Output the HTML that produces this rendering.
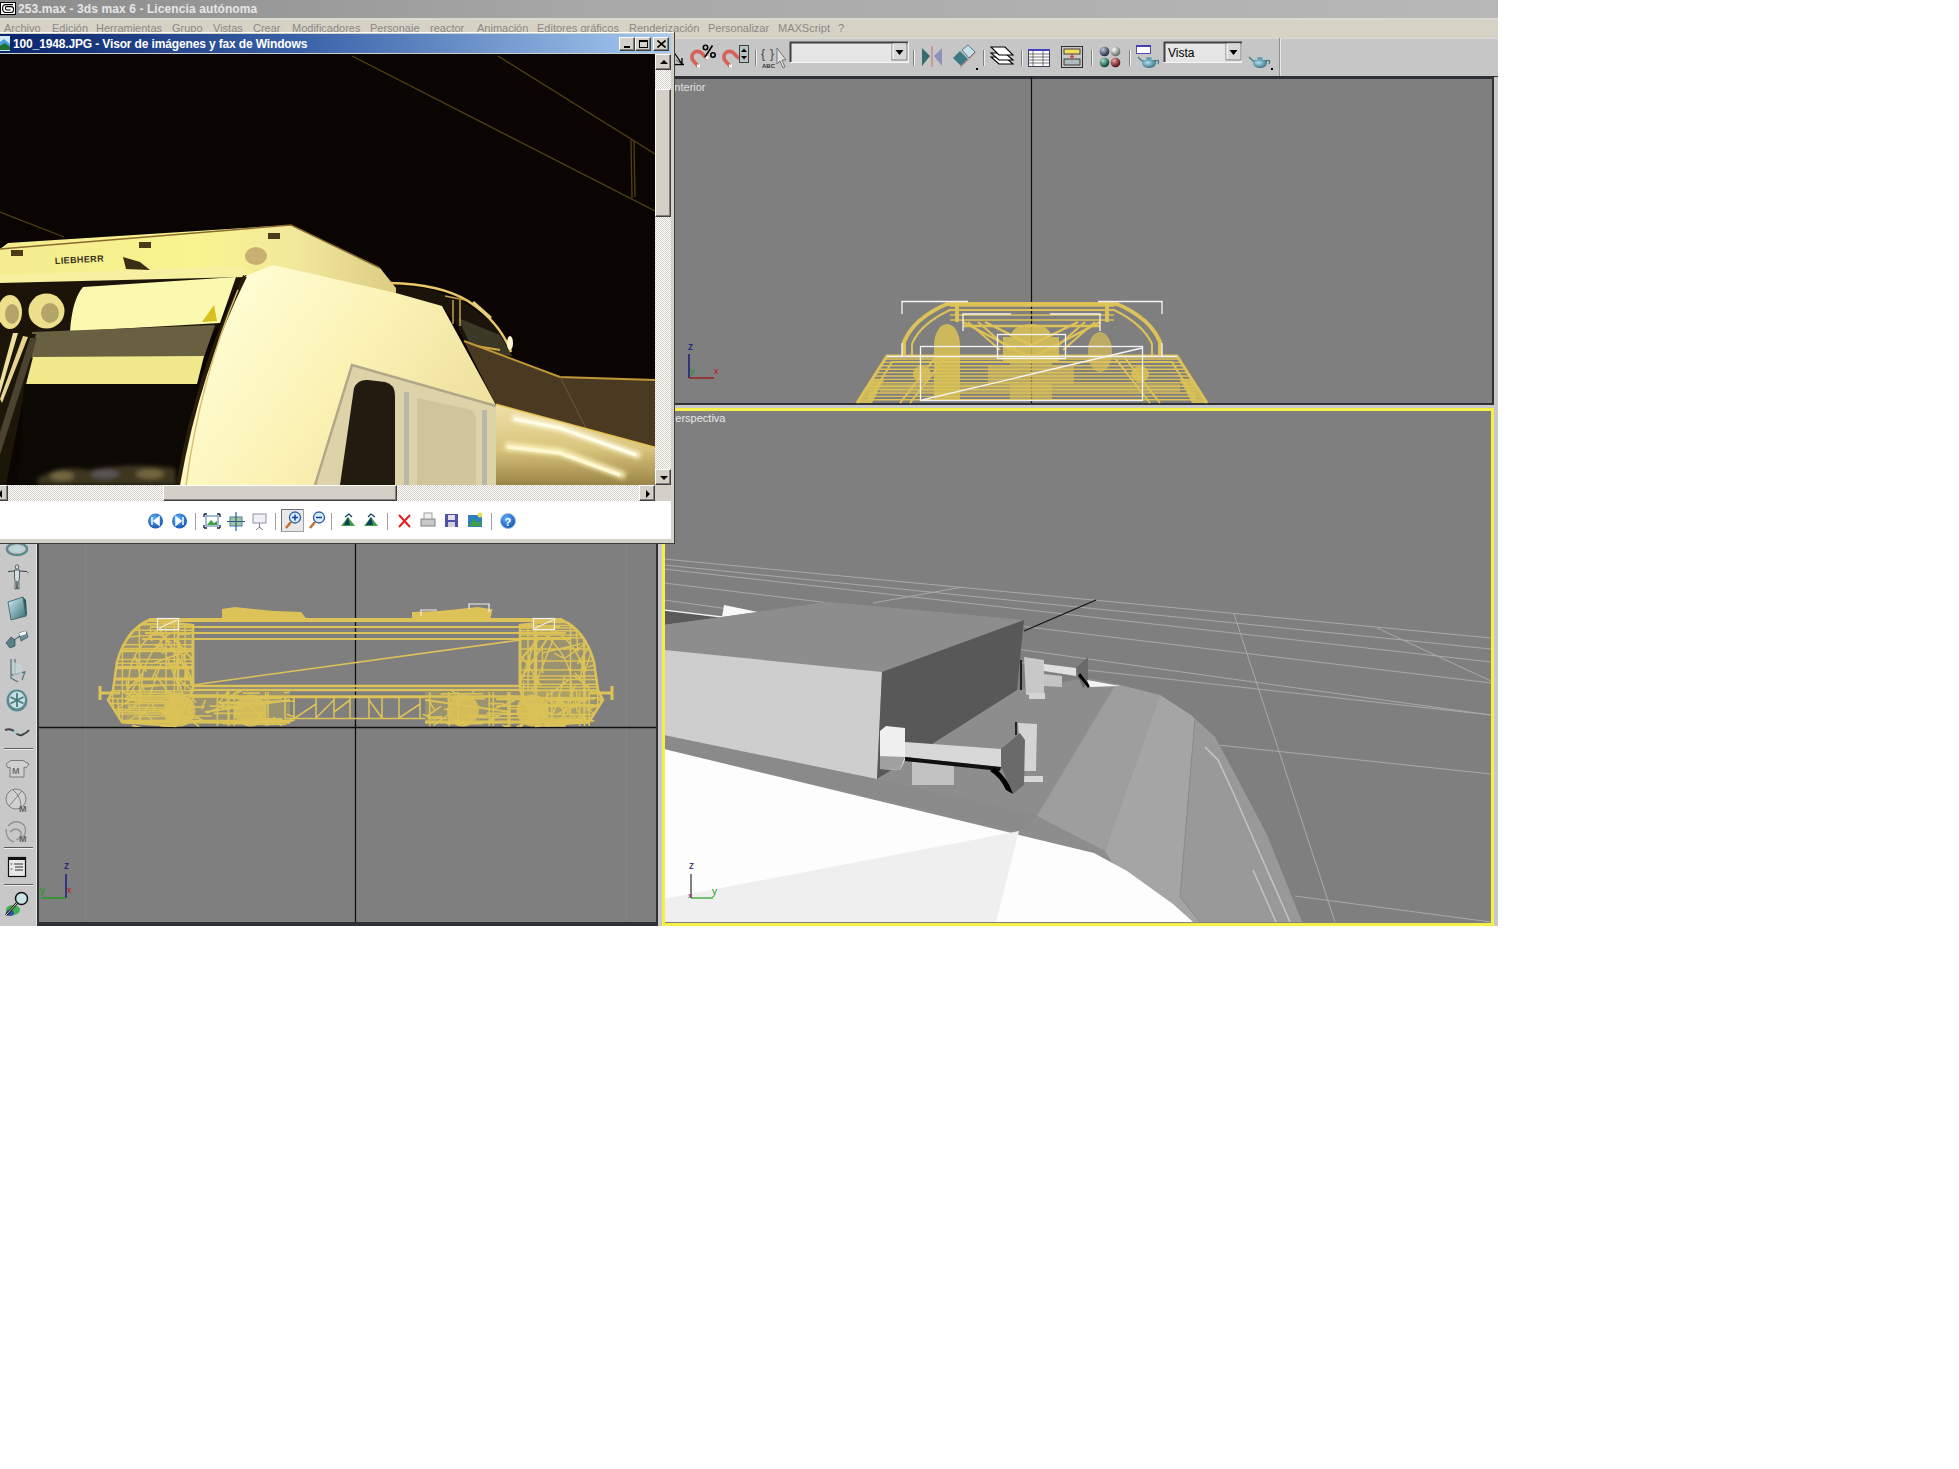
<!DOCTYPE html>
<html><head><meta charset="utf-8">
<style>
*{margin:0;padding:0;box-sizing:border-box}
html,body{width:1959px;height:1469px;overflow:hidden;background:#fff;font-family:"Liberation Sans",sans-serif}
.a{position:absolute}
#app{position:absolute;left:0;top:0;width:1498px;height:926px;background:#c8c8c8;overflow:hidden}
#title{left:0;top:0;width:1498px;height:18px;background:linear-gradient(90deg,#8c8c8c 0%,#a8a8a8 40%,#b8b8b8 100%)}
#title .t{left:18px;top:2px;font-size:12px;font-weight:bold;color:#e6e6e6;white-space:nowrap;letter-spacing:0.1px}
#menu{left:0;top:18px;width:1498px;height:20px;background:#d6d3c6;border-top:2px solid #dcd9d4}
#menu span{position:absolute;top:2px;font-size:11px;color:#8a8884;white-space:nowrap}

.vp{position:absolute;background:#7f7f7f}
.btn{position:absolute;width:16px;height:14px;background:#d4d0c8;border:1px solid;border-color:#fff #404040 #404040 #fff;box-shadow:inset -1px -1px 0 #808080}
.chk{background-color:#fff;background-image:linear-gradient(45deg,#d4d0c8 25%,transparent 25%,transparent 75%,#d4d0c8 75%),linear-gradient(45deg,#d4d0c8 25%,transparent 25%,transparent 75%,#d4d0c8 75%);background-size:2px 2px;background-position:0 0,1px 1px}
</style></head><body>
<div id="app">
  <div id="title" class="a">
    <svg class="a" style="left:0;top:0" width="17" height="17" viewBox="0 0 17 17"><rect x="0.5" y="2.5" width="15" height="12" fill="#fff" stroke="#000"/><path d="M13 4.6 H5.5 Q2.6 4.6 2.6 8.6 Q2.6 12.5 5.8 12.5 H10.8 Q13.6 12.5 13.6 9.2 Q13.6 6.6 10.8 6.6 H6.6 Q5.4 6.6 5.4 8.4 Q5.4 10 7.4 10 H10.6" fill="none" stroke="#000" stroke-width="1.1"/></svg>
    <div class="a t">253.max - 3ds max 6 - Licencia autónoma</div>
  </div>
  <div id="menu" class="a">
    <span style="left:4px">Archivo</span>
    <span style="left:52px">Edición</span>
    <span style="left:96px">Herramientas</span>
    <span style="left:172px">Grupo</span>
    <span style="left:213px">Vistas</span>
    <span style="left:253px">Crear</span>
    <span style="left:292px">Modificadores</span>
    <span style="left:370px">Personaje</span>
    <span style="left:430px">reactor</span>
    <span style="left:477px">Animación</span>
    <span style="left:537px">Editores gráficos</span>
    <span style="left:629px">Renderización</span>
    <span style="left:708px">Personalizar</span>
    <span style="left:778px">MAXScript</span>
    <span style="left:838px">?</span>
  </div>
  <div id="tb" class="a" style="left:662px;top:38px;width:836px;height:38px;background:#c6c6c6;border-top:1px solid #d8d8d8">
    <svg class="a" style="left:0;top:-1px" width="836" height="39" viewBox="662 38 836 39">
      <!-- angle snap -->
      <path d="M671 48 L682 64 M676 60 L682 64 L682 58" stroke="#000" stroke-width="1.3" fill="none"/><path d="M671 64.5 H684" stroke="#000" stroke-width="1.5"/><path d="M671 50 L671 64 L681 64Z" fill="#bcbcbc" opacity="0.7"/>
      <!-- magnet % -->
      <path d="M699 67 L693.5 61 A5.5 5.5 0 0 1 701.5 53 L707 58.5" stroke="#d86058" stroke-width="3.6" fill="none"/>
      <rect x="697" y="64.5" width="3" height="3" fill="#fff"/><rect x="705.5" y="56" width="3" height="3" fill="#fff"/>
      <circle cx="705.5" cy="47.5" r="2.2" fill="none" stroke="#000" stroke-width="1.6"/><circle cx="713" cy="55" r="2.2" fill="none" stroke="#000" stroke-width="1.6"/><path d="M712.5 45.5 L705 57" stroke="#000" stroke-width="1.6"/>
      <!-- magnet spinner -->
      <path d="M731 67 L725.5 61 A5.5 5.5 0 0 1 733.5 53 L739 58.5" stroke="#d86058" stroke-width="3.6" fill="none"/>
      <rect x="729" y="64.5" width="3" height="3" fill="#fff"/>
      <rect x="739.5" y="45.5" width="9" height="17" fill="#b8c4c4" stroke="#404040"/><path d="M741 52 L744 48.5 L747 52Z M741 56 L744 59.5 L747 56Z" fill="#000"/>
      <line x1="755.5" y1="50" x2="755.5" y2="66" stroke="#808080"/><line x1="756.5" y1="50" x2="756.5" y2="66" stroke="#f0f0f0"/>
      <!-- {} abc -->
      <text x="761" y="58" font-size="12" fill="#404040" font-family="Liberation Sans">{</text><text x="770" y="58" font-size="12" fill="#404040" font-family="Liberation Sans">}</text>
      <text x="762" y="68" font-size="6" font-weight="bold" fill="#303030" font-family="Liberation Sans">ABC</text>
      <path d="M777 48 L777 64 L780 61 L783 68 L785 67 L782 60 L786 60Z" fill="#e0e0e0" stroke="#606060" stroke-width="0.8"/>
      <!-- dropdown 1 -->
      <rect x="790.5" y="42.5" width="118" height="20" fill="#e6e6e6" stroke="#f4f4f4"/>
      <path d="M790.5 62 V42.5 H908" stroke="#404040" stroke-width="2" fill="none"/>
      <rect x="892" y="44" width="15" height="16" fill="#d8d8d8" stroke="#808080"/><path d="M893 44 H906 M893 44 V59" stroke="#fff"/>
      <path d="M895.5 50 H903.5 L899.5 55Z" fill="#000"/>
      <line x1="913.5" y1="50" x2="913.5" y2="66" stroke="#808080"/><line x1="914.5" y1="50" x2="914.5" y2="66" stroke="#f0f0f0"/>
      <!-- mirror -->
      <path d="M922 48 L930 56 L922 66Z" fill="#3a6a70"/><path d="M942 48 L934 56 L942 66Z" fill="#9090b8"/><line x1="932" y1="46" x2="932" y2="67" stroke="#d08080" stroke-width="1.3"/>
      <!-- align -->
      <path d="M953 58 L960 51 L968 59 L961 66Z" fill="#3a7a80"/><path d="M962 50 L968 45 L975 52 L969 58Z" fill="#c8e0e8" stroke="#406070" stroke-width="0.8"/><path d="M960 68 L976 52" stroke="#e08080" stroke-width="1"/><rect x="976" y="68" width="2" height="2" fill="#000"/>
      <line x1="983.5" y1="50" x2="983.5" y2="66" stroke="#808080"/><line x1="984.5" y1="50" x2="984.5" y2="66" stroke="#f0f0f0"/>
      <!-- layers -->
      <g fill="#fff" stroke="#000" stroke-width="1.1"><path d="M991 57 L1005 57 L1013 64 L999 64Z"/><path d="M991 53 L1005 53 L1013 60 L999 60Z"/><path d="M991 47 L1005 47 L1013 55 L999 55Z"/></g>
      <line x1="1021.5" y1="50" x2="1021.5" y2="66" stroke="#808080"/><line x1="1022.5" y1="50" x2="1022.5" y2="66" stroke="#f0f0f0"/>
      <!-- spreadsheet -->
      <rect x="1028.5" y="49.5" width="21" height="17" fill="#fff" stroke="#404060"/><rect x="1028" y="49" width="22" height="2" fill="#4040c0"/>
      <g stroke="#404040" stroke-width="0.7"><path d="M1029 54 H1049 M1029 57 H1049 M1029 60 H1049 M1029 63 H1049 M1033 51 V66 M1043 51 V66"/></g>
      <!-- schematic -->
      <rect x="1061.5" y="46.5" width="21" height="21" fill="#c8c8c8" stroke="#303030"/><rect x="1064" y="49" width="16" height="5" fill="#f0e060" stroke="#202020" stroke-width="0.8"/><rect x="1064" y="59" width="16" height="6" fill="#b0b8c0" stroke="#202020" stroke-width="0.8"/><path d="M1072 54 V58 M1070 56 L1072 58 L1074 56" stroke="#d04040" stroke-width="1.2" fill="none"/>
      <line x1="1091.5" y1="50" x2="1091.5" y2="66" stroke="#808080"/><line x1="1092.5" y1="50" x2="1092.5" y2="66" stroke="#f0f0f0"/>
      <!-- spheres -->
      <defs><radialGradient id="s1" cx="0.35" cy="0.3" r="0.7"><stop offset="0" stop-color="#c0c8e0"/><stop offset="1" stop-color="#202840"/></radialGradient>
      <radialGradient id="s2" cx="0.35" cy="0.3" r="0.7"><stop offset="0" stop-color="#ffffff"/><stop offset="1" stop-color="#606860"/></radialGradient>
      <radialGradient id="s3" cx="0.35" cy="0.3" r="0.7"><stop offset="0" stop-color="#a0e0d0"/><stop offset="1" stop-color="#104030"/></radialGradient>
      <radialGradient id="s4" cx="0.35" cy="0.3" r="0.7"><stop offset="0" stop-color="#f0a0a0"/><stop offset="1" stop-color="#501010"/></radialGradient>
      <radialGradient id="tp" cx="0.4" cy="0.35" r="0.7"><stop offset="0" stop-color="#b0e0f0"/><stop offset="1" stop-color="#306878"/></radialGradient></defs>
      <circle cx="1104.5" cy="51.5" r="4.8" fill="url(#s1)"/><circle cx="1115.5" cy="51.5" r="4.8" fill="url(#s2)"/><circle cx="1104.5" cy="62.5" r="4.8" fill="url(#s3)"/><circle cx="1115.5" cy="62.5" r="4.8" fill="url(#s4)"/>
      <line x1="1129.5" y1="50" x2="1129.5" y2="66" stroke="#808080"/><line x1="1130.5" y1="50" x2="1130.5" y2="66" stroke="#f0f0f0"/>
      <!-- render scene -->
      <rect x="1136.5" y="45.5" width="14" height="8" fill="#fff" stroke="#5050b0"/><rect x="1136" y="45" width="15" height="2" fill="#4040b0"/>
      <path d="M1142 60 Q1141 68 1149 68 Q1157 68 1156 60 Z" fill="url(#tp)"/><path d="M1142 61 L1138 57 M1156 61 Q1160 59 1158 64" stroke="#407888" stroke-width="1.3" fill="none"/><ellipse cx="1149" cy="58.5" rx="3" ry="1.5" fill="#60a0b0"/>
      <!-- dropdown vista -->
      <rect x="1164.5" y="42.5" width="77" height="20" fill="#e6e6e6" stroke="#f4f4f4"/>
      <path d="M1164.5 62 V42.5 H1242" stroke="#404040" stroke-width="2" fill="none"/>
      <rect x="1226" y="44" width="15" height="16" fill="#d8d8d8" stroke="#808080"/><path d="M1227 44 H1240 M1227 44 V59" stroke="#fff"/>
      <path d="M1229.5 50 H1237.5 L1233.5 55Z" fill="#000"/>
      <text x="1168" y="57" font-size="12" fill="#000" font-family="Liberation Sans">Vista</text>
      <!-- teapot -->
      <path d="M1253 60 Q1252 68 1260 68 Q1268 68 1267 60 Z" fill="url(#tp)"/><path d="M1253 61 L1249 57 M1267 61 Q1271 59 1269 64" stroke="#407888" stroke-width="1.3" fill="none"/><ellipse cx="1260" cy="58.5" rx="3" ry="1.5" fill="#60a0b0"/><rect x="1271" y="68" width="2" height="2" fill="#000"/>
      <line x1="1279.5" y1="38" x2="1279.5" y2="76" stroke="#909090"/><line x1="1280.5" y1="38" x2="1280.5" y2="76" stroke="#e8e8e8"/>
    </svg>
  </div>
  <div class="a" style="left:0;top:76px;width:1498px;height:2px;background:#2e3236"></div>
  <!-- viewports -->
  <div class="a" style="left:662px;top:77px;width:836px;height:849px;background:#c8c8c8"></div>
  <div class="vp" style="left:662px;top:77px;width:832px;height:328px;border:2px solid #2e3236;border-right-width:2px">
    <div class="a" style="left:3px;top:2px;font-size:11px;color:#e0e0e0;white-space:nowrap">Anterior</div>
    <svg class="a" style="left:-2px;top:-2px" width="832" height="328" viewBox="662 77 832 328">
      <line x1="1031.5" y1="77" x2="1031.5" y2="403" stroke="#101010" stroke-width="1.2"/>
      <g fill="none" stroke="#dcc257">
        <path d="M857 403 L887 356 L1177 356 L1207 403" stroke-width="3"/>
        <path d="M870 398 L892 362 L1172 362 L1194 398" stroke-width="2"/>
        <path d="M904 356 L904 342 Q914 318 947 304 L1117 304 Q1150 318 1160 342 L1160 356" stroke-width="4"/>
        <path d="M912 356 L912 344 Q920 324 950 310 L1114 310 Q1143 324 1152 344 L1152 356" stroke-width="2"/>
        <path d="M957 304 V322 M1107 304 V322" stroke-width="4"/>
        <path d="M963 322 L1031 358 L1100 322 M985 322 L1031 345 L1078 322 M963 326 L1100 326" stroke-width="2.5"/>
      </g>
      <g stroke="#dcc257" stroke-width="1.4"><line x1="885" y1="359.0" x2="1179" y2="359.0"/><line x1="883" y1="362.4" x2="1181" y2="362.4"/><line x1="881" y1="365.8" x2="1183" y2="365.8"/><line x1="879" y1="369.2" x2="1185" y2="369.2"/><line x1="877" y1="372.6" x2="1187" y2="372.6"/><line x1="875" y1="376.0" x2="1189" y2="376.0"/><line x1="873" y1="379.4" x2="1191" y2="379.4"/><line x1="868" y1="382.8" x2="1196" y2="382.8"/><line x1="868" y1="386.2" x2="1196" y2="386.2"/><line x1="868" y1="389.6" x2="1196" y2="389.6"/><line x1="868" y1="393.0" x2="1196" y2="393.0"/><line x1="868" y1="396.4" x2="1196" y2="396.4"/><line x1="868" y1="399.8" x2="1196" y2="399.8"/><line x1="950" y1="306" x2="1114" y2="306"/><line x1="950" y1="310" x2="1114" y2="310"/><line x1="950" y1="315" x2="1114" y2="315"/><line x1="950" y1="320" x2="1114" y2="320"/><path d="M900 403 L935 358 M910 403 L945 358 M1160 403 L1125 358 M1150 403 L1115 358 M968 322 L1000 350 M978 322 L1010 350 M1095 322 L1063 350 M1085 322 L1053 350" stroke-width="2"/></g>
      <g fill="#dcc257" opacity="0.85">
        <ellipse cx="947" cy="345" rx="13" ry="21"/><rect x="934" y="345" width="26" height="55"/>
        <ellipse cx="1031" cy="336" rx="20" ry="12"/><rect x="1003" y="337" width="56" height="26"/><rect x="1010" y="363" width="42" height="38" opacity="0.7"/>
        <rect x="988" y="366" width="22" height="18" opacity="0.7"/><rect x="1052" y="366" width="22" height="18" opacity="0.7"/>
        <ellipse cx="1100" cy="352" rx="12" ry="20" opacity="0.8"/>
        <ellipse cx="922" cy="374" rx="9" ry="8"/><ellipse cx="1140" cy="374" rx="9" ry="8"/>
        <rect x="880" y="384" width="300" height="8" opacity="0.6"/>
        <path d="M857 403 L872 380 L884 380 L872 403Z M1207 403 L1192 380 L1180 380 L1192 403Z"/>
      </g>
      <g fill="none" stroke="#f4f4f4" stroke-width="1.3">
        <path d="M902 314 V301.5 H968 M1098 301.5 H1162 V314 M902 343 V356 M887 356.5 H1177 M1162 343 V356"/>
        <path d="M963 331 V314 H1011 M1050 314 H1100 V331"/>
        <rect x="997.5" y="334.5" width="68" height="24"/>
        <rect x="920.5" y="346.5" width="222" height="54"/>
        <path d="M922 400 L1142 348"/>
      </g>
      <g stroke-width="1.3"><line x1="689" y1="378" x2="689" y2="354" stroke="#0a0a80"/><line x1="689" y1="378" x2="714" y2="378" stroke="#a01010"/></g>
      <text x="688" y="350" font-size="10" fill="#10108a" font-family="Liberation Sans">z</text>
      <text x="690" y="374" font-size="9" fill="#10a010" font-family="Liberation Sans">y</text>
      <text x="714" y="374" font-size="9" fill="#c01010" font-family="Liberation Sans">x</text>
    </svg>
  </div>
  <!-- left command panel -->
  <div class="a" style="left:0;top:543px;width:37px;height:383px;background:#c8c8c8;border-right:1px solid #e8e8e8">
    <svg class="a" style="left:0;top:0" width="37" height="383" viewBox="0 543 37 383">
      <defs><linearGradient id="tl" x1="0" y1="0" x2="1" y2="1"><stop offset="0" stop-color="#d8f0f4"/><stop offset="1" stop-color="#306a74"/></linearGradient></defs>
      <ellipse cx="17" cy="549" rx="10" ry="6" fill="none" stroke="#5a8a90" stroke-width="2.5"/><ellipse cx="17" cy="549" rx="5" ry="3" fill="#b8d8dc"/>
      <!-- biped -->
      <g fill="#d0e0e0" stroke="#3a4444" stroke-width="0.8"><ellipse cx="17" cy="567" rx="1.8" ry="2.2"/><path d="M14.5 570 L19.5 570 L19.5 578 L18.8 581 L19 589 L17.6 589 L17 581 L16.4 589 L15 589 L15.2 581 L14.5 578Z"/></g>
      <path d="M8 571.5 L14.5 571 M19.5 571 L27 571.5" stroke="#3a4444" stroke-width="1.2"/><path d="M27 572 L29 573" stroke="#708080" stroke-width="1"/>
      <!-- panel -->
      <path d="M8 602 L23 597 L26 616 L11 620Z" fill="url(#tl)" stroke="#305a60" stroke-width="0.8"/>
      <path d="M23 597 L26 600 L27 614 L26 616" fill="#2a5a60"/>
      <!-- two cubes -->
      <path d="M6 643 L11 637 L15 640 L15 646 L10 648Z" fill="#5a8088" stroke="#304850" stroke-width="0.7"/><path d="M14 640 L20 636" stroke="#304850" stroke-width="1"/>
      <path d="M19 633 L26 631 L28 637 L21 641Z" fill="#6a9098" stroke="#304850" stroke-width="0.7"/><path d="M19 633 L26 631 L26 634 L20 636Z" fill="#fff"/>
      <!-- chair -->
      <g stroke="#5a7a80" stroke-width="1.3" fill="none"><path d="M11 659 V678 L18 682 M11 675 L25 672 L22 680 M15 659 V674"/></g><path d="M13 662 L22 665 L22 674 L13 675Z" fill="#c0d8dc" opacity="0.7"/>
      <!-- wheel -->
      <ellipse cx="17" cy="700.5" rx="10.5" ry="11" fill="#5a8a90"/><ellipse cx="17" cy="700" rx="8" ry="8.5" fill="#c8e0e4"/><path d="M17 693 L17 707 M10.5 697 L23.5 703.5 M10.5 703.5 L23.5 697" stroke="#4a7a80" stroke-width="1.8"/>
      <!-- curve -->
      <path d="M5 730 Q10 728 14 731 Q18 736 22 735 Q27 733 29 730" stroke="#404848" stroke-width="2" fill="none"/><circle cx="15.5" cy="732" r="2" fill="#a8d0d8"/>
      <line x1="4" y1="748.5" x2="33" y2="748.5" stroke="#5a5a5a"/><line x1="4" y1="749.5" x2="33" y2="749.5" stroke="#f0f0f0"/>
      <!-- tshirt M -->
      <path d="M6 764 L11 760.5 L23 760.5 L29 764 L26 768 L24 767 V777 H10 V767 L8 768Z" fill="#d0d0d0" stroke="#707070" stroke-width="0.9"/>
      <text x="12" y="774" font-size="9" font-weight="bold" fill="#707070" font-family="Liberation Sans">M</text>
      <!-- ball M -->
      <circle cx="16" cy="799" r="10" fill="#d0d0d0" stroke="#808080" stroke-width="1"/><path d="M9 806 L22 791 M13 790 Q22 797 21 809" stroke="#808080" fill="none"/>
      <text x="19" y="812" font-size="9" font-weight="bold" fill="#606060" font-family="Liberation Sans">M</text>
      <!-- swirl M -->
      <g fill="none" stroke="#909090" stroke-width="1.3"><path d="M8 826 Q16 818 24 825 Q28 832 22 838 M10 832 Q16 826 21 832 Q22 838 16 840 M6 829 Q6 840 14 842"/></g>
      <text x="19" y="842" font-size="9" font-weight="bold" fill="#606060" font-family="Liberation Sans">M</text>
      <line x1="4" y1="847.5" x2="33" y2="847.5" stroke="#5a5a5a"/><line x1="4" y1="848.5" x2="33" y2="848.5" stroke="#f0f0f0"/>
      <!-- window icon -->
      <rect x="8.5" y="857.5" width="17" height="19" fill="#e8e8e8" stroke="#101010" stroke-width="1.2"/><rect x="8" y="857" width="18" height="3" fill="#101010"/>
      <path d="M14 864 H23 M15 867 H23 M15 870 H23" stroke="#303030"/><circle cx="11.5" cy="864" r="1" fill="#909090"/><circle cx="11.5" cy="869" r="1" fill="#909090"/>
      <line x1="4" y1="884.5" x2="33" y2="884.5" stroke="#5a5a5a"/><line x1="4" y1="885.5" x2="33" y2="885.5" stroke="#f0f0f0"/>
      <!-- magnifier -->
      <ellipse cx="13" cy="910" rx="7" ry="5" fill="#40b050"/><ellipse cx="10" cy="913" rx="4" ry="3" fill="#3050a0"/>
      <path d="M6 915 L17 903" stroke="#101010" stroke-width="2.5"/><path d="M6 915 L17 903" stroke="#e0e0e0" stroke-width="1"/>
      <circle cx="21.5" cy="898.5" r="6" fill="#c8e4e8" stroke="#101010" stroke-width="1.5"/>
    </svg>
  </div>
  <div class="a" style="left:37px;top:543px;width:2px;height:383px;background:#2e3236"></div>
  <div class="vp" style="left:39px;top:543px;width:619px;height:383px;border-right:2px solid #2e3236;border-bottom:4px solid #2e3236">
    <svg class="a" style="left:0;top:0" width="617" height="379" viewBox="39 543 617 379">
      <line x1="85.5" y1="543" x2="85.5" y2="922" stroke="#858585" stroke-width="1"/>
      <line x1="626.5" y1="543" x2="626.5" y2="922" stroke="#858585" stroke-width="1"/>
      <line x1="355.5" y1="543" x2="355.5" y2="922" stroke="#101010" stroke-width="1.3"/>
      <line x1="39" y1="727.5" x2="656" y2="727.5" stroke="#101010" stroke-width="1.3"/>
      <g fill="none" stroke="#dcc257">
        <path d="M149 620 L562 620" stroke-width="4"/>
        <path d="M150 627 L560 627 M145 633 L566 633 M142 639 L570 639" stroke-width="2"/>
        <path d="M193 641 V686 M520 641 V686 M178 625 V690 M535 625 V690" stroke-width="2.5"/>
        <path d="M193 686 L520 686 M190 690 L523 690 M190 696.5 L523 696.5" stroke-width="2.5"/>
        <path d="M193 685 L520 640" stroke-width="1.5"/>
        <path d="M222 611 L300 614 L305 620 M412 614 L490 611 L488 620" stroke-width="4"/>
        <path d="M149 620 Q126 630 117 662 L113 690 L108 700 L122 722 L175 726 L193 690 L193 625Z" stroke-width="2.5"/><path d="M562 620 Q585 630 594 662 L598 690 L603 700 L589 722 L536 726 L520 690 L520 625Z" stroke-width="2.5"/><path d="M122 722 L290 722 M425 722 L589 722" stroke-width="3"/>
        <path d="M100 686 V700 M612 686 V700 M100 693 H120 M590 693 H612" stroke-width="3"/>
        <path d="M160 630 L193 680 M175 640 L193 660 M553 630 L520 680 M538 640 L520 660 M205 712 L290 700 M425 700 L510 712" stroke-width="2"/>
        <path d="M285 697 V719 M294 697 V719 M316 697 V719 M334 697 V719 M350 697 V719 M369 697 V719 M382 697 V719 M399 697 V719 M420 697 V719 M285 697.5 H425 M285 718.5 H425 M295 718 L316 704 M316 718 L334 700 M369 700 L382 718 M399 718 L420 704 M334 712 L350 700" stroke-width="1.6"/>
      </g>
      <g fill="#dcc257">
        <path d="M222 609 L235 607 L300 614 L305 622 L222 622Z"/>
        <path d="M412 614 L478 607 L490 609 L490 622 L412 622Z"/>
        <clipPath id="cfl"><path d="M149 620 Q126 630 117 662 L113 690 L108 700 L122 722 L175 726 L193 690 L193 625Z"/></clipPath><clipPath id="cfr"><path d="M562 620 Q585 630 594 662 L598 690 L603 700 L589 722 L536 726 L520 690 L520 625Z"/></clipPath>
        <g clip-path="url(#cfl)"><path d="M149 620 Q126 630 117 662 L113 690 L108 700 L122 722 L175 726 L193 690 L193 625Z" fill="#dcc257" opacity="0.3"/><path d="M190.4 715.8 L217.2 723.0 M152.7 629.7 L171.9 643.0 M105 666.4 H195 M105 624.7 H195 M142.9 672.9 L129.0 688.3 M105 703.5 H195 M164.2 685.2 L143.4 687.1 M138.2 679.6 L128.8 696.7 M105 668.6 H195 M158.2 665.6 L151.5 679.5 M105 651.5 H195 M122.6 627.9 L133.2 631.3 M105 679.7 H195 M134.8 656.8 L146.6 671.8 M154.4 644.2 L186.0 655.3 M179.6 641.9 L174.2 679.1 M190.1 633.9 L178.5 634.8 M107.1 615 V728 M166.8 725.0 L135.4 747.2 M193.9 699.6 L212.2 734.4 M122.4 615 V728 M105 667.7 H195 M105 720.5 H195 M124.4 626.7 L123.1 641.7 M178.2 643.6 L187.2 679.5 M135.8 715.8 L105.1 736.2 M142.1 693.3 L117.0 708.2 M105 648.4 H195 M174.4 615 V728 M154.5 708.4 L181.8 718.1 M105 678.2 H195 M127.4 722.5 L153.4 729.1 M126.2 678.4 L128.3 701.8 M105.4 657.6 L94.2 666.5 M123.3 692.0 L143.4 704.1 M112.4 694.1 L114.3 724.7 M155.0 674.5 L177.0 704.2 M105 714.1 H195 M149.8 702.8 L135.2 726.9 M105 651.1 H195 M105 649.1 H195 M135.7 658.8 L144.3 692.2 M154.8 643.9 L163.0 653.6 M105 644.8 H195 M150.2 627.5 L151.8 641.0 M144.8 712.0 L169.2 737.8 M105 726.0 H195 M108.8 706.2 L122.4 722.1 M105 709.6 H195 M105 698.4 H195 M166.1 615 V728 M105 623.8 H195 M163.9 634.2 L126.7 637.0 M105 617.2 H195 M117.5 697.7 L120.6 728.8 M174.4 707.8 L165.6 734.1 M105 630.2 H195 M105 711.8 H195 M105 663.2 H195 M105 685.0 H195 M182.3 664.3 L194.7 691.1 M188.3 650.2 L151.3 664.0 M116.6 658.0 L90.1 680.7 M105 659.6 H195 M173.2 675.5 L190.8 689.1 M105 650.7 H195 M179.1 681.6 L183.7 698.3 M105 690.8 H195 M120.6 707.9 L111.4 745.8 M161.1 663.3 L148.5 698.7 M164.5 663.6 L199.0 670.5 M139.4 615 V728 M105 618.9 H195 M192.7 615 V728 M168.8 690.5 L178.6 701.9 M178 625 V690 M185 625 V690 M160 640 L178 685 M178 640 L193 685 M162 628 Q138 642 130 668 L127 700 M172 632 Q150 648 143 672 L140 700" stroke="#dcc257" stroke-width="1.5" fill="none"/></g>
        <g clip-path="url(#cfr)"><path d="M562 620 Q585 630 594 662 L598 690 L603 700 L589 722 L536 726 L520 690 L520 625Z" fill="#dcc257" opacity="0.3"/><path d="M523.7 681.5 L522.5 707.7 M518 622.6 H608 M531.1 687.5 L547.2 711.1 M572.6 675.1 L589.2 686.9 M542.2 647.1 L542.7 673.5 M544.6 723.8 L578.2 726.2 M599.1 632.3 L577.6 664.1 M528.1 719.1 L514.9 720.3 M525.1 624.2 L499.8 643.1 M574.9 672.8 L592.7 693.3 M576.2 713.9 L602.3 732.6 M524.4 707.7 L538.4 716.4 M518 689.9 H608 M518 725.3 H608 M518 706.5 H608 M569.2 679.6 L545.8 696.9 M518 705.0 H608 M570.5 615 V728 M599.4 661.8 L588.2 667.4 M518 690.8 H608 M592.9 638.5 L565.2 658.0 M518 630.8 H608 M605.8 684.4 L611.5 708.9 M565.0 675.7 L554.0 712.0 M593.5 645.1 L582.8 678.1 M603.7 718.4 L626.9 728.3 M536.5 615 V728 M606.5 701.8 L623.1 707.2 M597.7 615 V728 M532.4 677.2 L540.3 685.0 M607.2 702.7 L597.3 713.4 M575.3 700.8 L577.3 712.2 M541.9 698.4 L545.6 731.6 M518 625.4 H608 M561.2 704.6 L570.1 733.2 M583.9 615 V728 M518 714.4 H608 M520.1 712.0 L496.5 731.8 M518 697.8 H608 M574.4 723.9 L545.8 728.7 M530.9 648.7 L528.5 674.3 M575.2 685.2 L561.0 720.8 M584.5 615 V728 M554.2 653.3 L563.4 658.1 M518 648.9 H608 M518 669.9 H608 M601.3 615 V728 M577.9 710.7 L586.6 721.0 M538.5 726.3 L547.0 761.9 M518 625.6 H608 M580.4 643.9 L542.2 652.9 M606.3 726.1 L634.8 740.4 M583.9 653.4 L580.1 680.8 M522.6 657.4 L541.2 685.6 M518 622.0 H608 M518 628.1 H608 M595.9 655.1 L624.5 664.5 M518 679.5 H608 M559.0 697.9 L546.0 730.9 M599.1 699.3 L615.0 718.8 M588.6 697.5 L558.0 714.0 M575.6 619.9 L577.9 651.7 M594.3 664.6 L621.8 688.8 M535.2 619.3 L509.9 629.5 M518 726.9 H608 M586.3 706.1 L604.1 724.6 M518 684.2 H608 M589.1 628.1 L606.4 641.1 M518 660.9 H608 M595.9 635.3 L581.4 643.8 M518 687.0 H608 M518 637.7 H608 M518 635.0 H608 M518 718.0 H608 M518 676.0 H608 M535 625 V690 M528 625 V690 M553 640 L535 685 M535 640 L520 685 M551 628 Q575 642 583 668 L586 700 M541 632 Q563 648 570 672 L573 700" stroke="#dcc257" stroke-width="1.5" fill="none"/></g>
        
        <g opacity="0.9"><circle cx="179.5" cy="710.5" r="16"/><circle cx="250.5" cy="710.5" r="16"/><circle cx="463" cy="710.5" r="16"/><circle cx="532.5" cy="710.5" r="16"/></g>
        <clipPath id="cbg"><rect x="120" y="690" width="175" height="37"/><rect x="420" y="690" width="175" height="37"/></clipPath><g clip-path="url(#cbg)"><path d="M217.4 692 V726 M201.8 709.3 L205.3 699.8 M228.9 692 V726 M140.5 702.3 L124.2 711.6 M131.9 725.4 L150.5 730.0 M151.0 692.5 L152.1 679.3 M129.1 700.2 H164.9 M195.1 720.6 H238.9 M234.3 692 V726 M170.9 692 V726 M289.3 720.6 L297.6 715.0 M134.5 701.8 H184.0 M177.2 720.8 H235.3 M125.1 699.1 L141.5 698.2 M190.6 694.5 L195.8 702.8 M169.9 695.0 H228.3 M144.5 700.4 L128.5 687.2 M154.3 711.0 L152.2 701.7 M146.6 713.9 L131.3 711.5 M256.1 701.2 H307.2 M153.4 722.1 H186.2 M230.9 695.4 L250.5 686.8 M169.4 718.3 H197.7 M203.7 695.1 H229.6 M186.3 707.4 L204.7 706.9 M268.0 692 V726 M247.6 697.2 H299.4 M224.8 698.5 H282.1 M244.1 724.3 H286.3 M130.2 695.5 H188.5 M159.7 716.0 H211.8 M173.4 692 V726 M134.3 716.5 H159.6 M265.6 692 V726 M171.2 723.2 L159.4 708.7 M133.2 707.2 H156.1 M142.8 711.5 H174.1 M286.8 714.3 L294.4 716.9 M127.4 693.2 H183.4 M283.9 692.7 L289.3 692.2 M177.6 726.0 L160.6 727.4 M273.5 717.1 L281.7 725.9 M183.1 715.3 L199.1 726.4 M241.6 718.9 H282.3 M188.1 711.8 L192.4 699.2 M288.9 721.9 L298.0 718.6 M220.9 707.0 L234.4 694.5 M129.9 712.4 L129.2 704.4 M207.0 712.9 L223.9 705.6 M216.5 702.2 H240.7 M214.1 722.8 H249.0 M178.9 714.6 L166.9 712.6 M275.8 721.9 L271.2 724.4 M192.0 696.6 H244.7 M242.4 724.3 L233.4 714.4 M170.4 692 V726 M209.5 706.1 H246.7 M257.6 720.5 H292.9 M242.8 693.1 H259.7 M219.1 702.5 L230.8 688.1 M128.3 707.5 H180.7 M131.3 696.8 H174.7 M213.4 713.4 H264.8 M237.9 698.8 L236.9 689.1 M221.4 708.1 H244.5 M219.1 703.8 H257.6 M249.8 705.4 L261.5 717.6 M222.5 723.7 H243.4 M228.2 692 V726 M187.2 711.3 L202.3 720.2" stroke="#dcc257" stroke-width="1.6" fill="none"/><path d="M501.5 714.1 L489.7 720.8 M530.9 716.4 L519.4 728.4 M586.3 710.3 L597.9 704.9 M566.2 703.8 L549.5 702.1 M551.8 692 V726 M429.7 692 V726 M435.6 719.2 L422.5 714.2 M448.2 697.1 L448.8 703.8 M538.7 724.2 L538.4 737.6 M496.1 699.5 H524.2 M530.4 709.8 L544.2 711.6 M539.1 705.0 H594.6 M555.7 720.9 H594.3 M458.2 692 V726 M508.0 692 V726 M429.6 725.0 L430.2 722.0 M517.9 708.7 L525.5 695.7 M493.3 692 V726 M577.4 701.2 L576.3 690.0 M546.6 719.7 H583.0 M508.4 698.5 H565.1 M428.1 718.5 H451.8 M468.5 715.4 H499.5 M442.3 716.9 L427.2 717.2 M496.6 698.7 H531.3 M496.5 706.1 H518.6 M511.2 713.5 H550.0 M525.9 721.1 L515.2 728.4 M573.9 702.7 L566.5 715.4 M544.8 725.9 H565.8 M460.0 716.7 H479.4 M494.6 718.9 L479.6 715.9 M427.9 698.8 L435.2 711.2 M444.0 709.2 L454.4 709.3 M456.2 694.4 L440.4 680.5 M509.9 692 V726 M449.2 692 V726 M538.4 698.9 H598.0 M440.7 694.1 L458.8 693.0 M478.9 707.9 L479.5 705.8 M427.2 715.8 L441.0 706.3 M547.0 692 V726 M447.3 698.6 H485.4 M533.2 722.4 H579.9 M528.8 705.8 L532.8 705.9 M557.8 700.8 L574.2 708.1 M559.4 705.8 L575.3 717.2 M551.6 718.0 L547.8 724.7 M488.3 703.6 H503.8 M509.2 713.7 H534.7 M534.9 703.5 L541.3 705.6 M489.3 692 V726 M531.0 715.8 L541.4 730.2 M524.7 712.9 H551.3 M451.4 693.7 H483.3 M547.3 700.5 H587.0 M584.6 692 V726 M589.2 692 V726 M558.6 694.6 L562.5 702.4 M446.6 723.6 H482.8 M507.5 708.8 H525.1 M494.4 709.9 L498.3 705.9 M500.7 714.3 H528.4 M473.8 692.5 L463.6 678.8 M477.6 717.7 H533.0 M433.3 725.6 L451.1 712.8 M495.9 708.2 L514.8 700.5 M579.6 692 V726 M502.3 725.3 L514.9 728.4 M486.5 713.2 H510.7" stroke="#dcc257" stroke-width="1.6" fill="none"/></g>
        <rect x="125" y="692" width="165" height="32" opacity="0.3"/><rect x="425" y="692" width="165" height="32" opacity="0.3"/>
      </g>
      <g fill="none" stroke="#f0f0f0" stroke-width="1.2">
        <rect x="157.5" y="618.5" width="21" height="11"/><path d="M159 628 L177 620"/>
        <rect x="533.5" y="618.5" width="21" height="11"/><path d="M535 628 L553 620"/>
        <path d="M421 616 V610 H437 M469 609 V604 H489 V612"/>
      </g>
      <g stroke-width="1.3"><line x1="66" y1="898" x2="66" y2="874" stroke="#0a0a90"/><line x1="66" y1="898" x2="41" y2="898" stroke="#10a010"/></g>
      <text x="64" y="869" font-size="10" fill="#10108a" font-family="Liberation Sans">z</text>
      <text x="40" y="894" font-size="10" fill="#10a010" font-family="Liberation Sans">y</text>
      <text x="67" y="893" font-size="9" fill="#c01010" font-family="Liberation Sans">x</text>
    </svg>
  </div>
  <!-- perspective viewport -->
  <div class="a" style="left:662px;top:408px;width:832px;height:518px;background:#7f7f7f;border:3px solid #f4f048;border-bottom-width:3px;overflow:hidden">
    <svg class="a" style="left:-3px;top:-3px" width="832" height="518" viewBox="662 408 832 518">
      <g stroke="#a9a9a9" stroke-width="1" fill="none">
        <path d="M664 559 L1491 638"/><path d="M664 565 L1491 649"/><path d="M664 569 L1491 662"/>
        <path d="M664 583 L1491 683"/><path d="M664 600 L1491 715"/><path d="M664 623 L1491 715"/>
        <path d="M1218 745 L1491 774"/><path d="M1295 896 L1491 922"/>
        <path d="M1234 614 L1335 922"/><path d="M1377 628 L1491 681"/>
        <path d="M873 603 L963 587"/>
      </g>
      <!-- body silhouette -->
      <path d="M664 625 L828 602 L1024 620 L1017 690 L1087 678 L1116 684 L1160 695 L1191 715 L1215 737 L1237 778 L1267 835 L1302 922 L664 922Z" fill="#8d8d8d"/>
      <path d="M664 611 L722 617 L664 625Z" fill="#5a5a5a"/>
      <path d="M664 610 L722 617" stroke="#f4f4f4" stroke-width="1.3"/>
      <path d="M724 605 L758 612 L722 617Z" fill="#f8f8f8"/>
      <!-- faces of body -->
      <path d="M1116 684 L1160 695 L1105 851 L1037 816Z" fill="#9e9e9e"/>
      <path d="M1160 695 L1191 715 L1195 719 L1180 897 L1200 922 L1150 922 L1105 851Z" fill="#a5a5a5"/>
      <path d="M1195 719 L1215 737 L1237 778 L1267 835 L1302 922 L1200 922 L1180 897Z" fill="#999999"/>
      <g stroke="#c4c4c4" stroke-width="1.5" fill="none"><path d="M1205 747 L1218 760 L1232 790 L1290 922"/><path d="M1253 870 L1276 922"/></g>
      <g stroke="#8a8a8a" stroke-width="1" fill="none"><path d="M1195 719 L1180 897 L1200 922"/></g>
      <!-- ledge + white -->
      <path d="M664 735 L877 779 L1037 816 L1019 831 L664 749Z" fill="#8a8a8a"/>
      <path d="M664 749 L1094 853 L1127 871 L1173 904 L1193 922 L664 922Z" fill="#fdfdfd"/>
      <path d="M664 899 L1019 831 L996 922 L664 922Z" fill="#efefef"/>
      <!-- box -->
      <path d="M664 625 L722 617 L828 602 L1024 620 L882 672 L664 650Z" fill="#8d8d8d"/>
      <path d="M664 650 L882 672 L877 779 L664 735Z" fill="#cecece"/>
      <path d="M882 672 L1024 620 L1017 690 L877 779Z" fill="#585858"/>
      <line x1="1024" y1="631" x2="1096" y2="600" stroke="#101010" stroke-width="1.2"/>
      <!-- horn 1 -->
      <path d="M1018 723 L1037 724 L1036 771 L1022 771Z" fill="#d4d4d4"/><rect x="1021" y="776" width="22" height="6" fill="#d8d8d8"/>
      <path d="M1016 722 V735" stroke="#000" stroke-width="1.5"/>
      <rect x="912" y="762" width="42" height="23" fill="#c2c2c2"/>
      <path d="M905 742 L1001 749 L1001 767 L905 757Z" fill="#d8d8d8"/>
      <path d="M905 757 L1001 767 L1000 771 L905 761Z" fill="#101010"/>
      <path d="M880 731 L886 726 L905 728 L905 760 L900 770 L880 769Z" fill="#f0f0f0"/>
      <path d="M880 756 L905 757 L900 770 L880 769Z" fill="#a0a0a0"/>
      <path d="M1001 749 L1020 733 L1025 740 L1024 785 L1013 794 Q1005 775 1001 767Z" fill="#6a6a6a"/>
      <path d="M995 768 Q1008 778 1013 794 L1006 790 Q1000 777 990 771Z" fill="#000"/>
      <!-- horn 2 -->
      <path d="M1024 657 L1044 660 L1044 694 L1026 695Z" fill="#c8c8c8"/>
      <path d="M1021 660 V690" stroke="#000" stroke-width="1.5"/>
      <rect x="1029" y="693" width="16" height="6" fill="#d4d4d4"/>
      <path d="M1044 664 L1076 668 L1076 676 L1044 671Z" fill="#e0e0e0"/>
      <path d="M1044 674 L1062 676 L1062 687 L1044 686Z" fill="#c4c4c4"/>
      <path d="M1076 668 L1088 657 L1088 682 L1083 688 L1078 676Z" fill="#686868"/>
      <path d="M1078 676 Q1083 681 1088 688 L1090 686 Q1084 678 1080 673Z" fill="#000"/>
      <path d="M1087 680 L1120 686 L1090 687Z" fill="#f4f4f4"/>
      <g stroke-width="1.2"><line x1="691" y1="898" x2="691" y2="874" stroke="#303030"/><line x1="691" y1="898" x2="713" y2="898" stroke="#20a020"/></g>
      <text x="689" y="869" font-size="10" fill="#202060" font-family="Liberation Sans">z</text>
      <text x="712" y="895" font-size="10" fill="#20a020" font-family="Liberation Sans">y</text>
      <text x="688" y="898" font-size="8" fill="#802080" font-family="Liberation Sans">x</text>
    </svg>
    <div class="a" style="left:3px;top:1px;font-size:11px;color:#e8e8e8;white-space:nowrap">Perspectiva</div>
  </div>
</div>
<!-- viewer window -->
<div class="a" id="viewer" style="left:0;top:32px;width:675px;height:512px;background:#d4d0c8;border-right:1px solid #404040;border-bottom:1px solid #404040">
  <div class="a" style="left:0;top:0;width:674px;height:1px;background:#fff"></div>
  <div class="a" style="left:0;top:2px;width:671px;height:19px;background:linear-gradient(90deg,#0a246a 0%,#3a62a8 45%,#a6caf0 100%)"></div>
  <svg class="a" style="left:0;top:4px" width="10" height="15" viewBox="0 0 10 15"><rect x="0" y="0" width="10" height="15" fill="#d0e8f8"/><path d="M0 6 L4 3 L10 8 V12 H0Z" fill="#4aa0d8"/><path d="M0 10 L5 7 L10 11 V14 H0Z" fill="#207030"/></svg>
  <div class="a" style="left:13px;top:5px;font-size:12px;font-weight:bold;color:#fff;white-space:nowrap;letter-spacing:-0.14px">100_1948.JPG - Visor de imágenes y fax de Windows</div>
  <div class="a btn" style="left:619px;top:5px"><div class="a" style="left:4px;top:8px;width:6px;height:2px;background:#000"></div></div>
  <div class="a btn" style="left:635px;top:5px"><div class="a" style="left:3px;top:2px;width:9px;height:8px;border:1px solid #000;border-top-width:2px"></div></div>
  <div class="a btn" style="left:653px;top:5px"><svg class="a" style="left:3px;top:2px" width="9" height="8"><path d="M0.5 0.5 L8.5 7.5 M8.5 0.5 L0.5 7.5" stroke="#000" stroke-width="1.6"/></svg></div>
  <!-- image -->
  <div class="a" style="left:0;top:22px;width:655px;height:431px;background:#0a0503;overflow:hidden" id="photo"><svg width="655" height="431" viewBox="0 54 655 431">
<defs>
<linearGradient id="gcab" gradientUnits="userSpaceOnUse" x1="230" y1="290" x2="480" y2="470"><stop offset="0" stop-color="#fffdd4"/><stop offset="0.45" stop-color="#fbf2b4"/><stop offset="1" stop-color="#ecdc98"/></linearGradient>
<linearGradient id="groof" x1="0" y1="0" x2="1" y2="0"><stop offset="0" stop-color="#f4ec90"/><stop offset="0.5" stop-color="#f8f48e"/><stop offset="0.75" stop-color="#f2e89c"/><stop offset="1" stop-color="#dccc84"/></linearGradient>
<filter id="blr" x="-20%" y="-50%" width="140%" height="200%"><feGaussianBlur stdDeviation="2"/></filter><linearGradient id="gside" x1="0" y1="0" x2="0" y2="1"><stop offset="0" stop-color="#eee0a8"/><stop offset="0.55" stop-color="#d8c47c"/><stop offset="1" stop-color="#9a8446"/></linearGradient>
</defs>
<g stroke="#5a4818" stroke-width="1.3" fill="none" opacity="0.9">
<path d="M352 56 L655 211"/><path d="M498 56 L655 154"/><path d="M0 212 L64 237"/><path d="M631 140 L632 198 M634 140 L635 197"/>
</g>
<!-- roof box -->
<path d="M0 249 L8 243 L291 225 L380 268 L396 288 L396 300 L245 275 L0 278 Z" fill="url(#groof)"/>
<path d="M0 249 L291 225 L380 268" stroke="#8a6a30" stroke-width="1.5" fill="none"/>
<path d="M0 275 L245 266 L245 283 L0 286Z" fill="#f6f0a0"/>
<rect x="11" y="250" width="12" height="6" fill="#4a3a1a"/><rect x="139" y="242" width="12" height="6" fill="#4a3a1a"/><rect x="268" y="233" width="12" height="6" fill="#4a3a1a"/>
<text x="55" y="264" font-size="9" font-weight="bold" fill="#3a3018" font-family="Liberation Sans" transform="rotate(-3 55 264)" letter-spacing="0.4">LIEBHERR</text>
<path d="M123 257 L140 262 L150 270 L126 269Z" fill="#3a2e14"/>
<ellipse cx="256" cy="256" rx="11" ry="9" fill="#c8b070"/>
<!-- pantograph area -->
<path d="M396 285 L430 289 L462 301 L492 322 L510 345 L512 357 L470 352 L455 322 L444 308 L396 294Z" fill="#1a140a"/>
<path d="M458 318 L500 335 L512 356 L474 353Z" fill="#3c3826"/>
<path d="M390 283 Q440 284 468 301 Q500 322 511 352" stroke="#e8c868" stroke-width="2.5" fill="none"/>
<path d="M473 302 L491 318" stroke="#e8d080" stroke-width="3" fill="none"/>
<path d="M453 300 V324 M460 300 V326 M445 296 L465 300" stroke="#c0a050" stroke-width="1.5" fill="none"/>
<ellipse cx="510" cy="343" rx="3" ry="7" fill="#fff8d0"/>
<path d="M470 345 L500 350" stroke="#d0a840" stroke-width="2" fill="none"/>
<!-- headlight dark region -->
<path d="M0 283 L245 277 L236 288 L210 340 L190 395 L26 395 L0 400Z" fill="#1c1408"/>
<ellipse cx="10" cy="312" rx="12" ry="17" fill="#ece08c"/><ellipse cx="46.5" cy="311" rx="18" ry="17.5" fill="#ece08c"/>
<ellipse cx="12" cy="314" rx="7" ry="10" fill="#b4a468"/><ellipse cx="50" cy="313" rx="9" ry="10" fill="#b4a468"/>
<path d="M83 287 L236 277 L220 323 L70 331.5 Q72 300 83 287Z" fill="#fbf8b0"/>
<path d="M202 322 L214 305 L217 321Z" fill="#d8c020"/>
<path d="M32 332 L215 325 L204 357 L30 358Z" fill="#686040"/>
<path d="M33 357 L204 356 L197 384 L26 384Z" fill="#f2e88c"/>
<!-- left pillars -->
<path d="M0 333 L36 334 L6 485 L0 485Z" fill="#1c1608"/><path d="M13 333 L18 333 L0 394 L0 381Z" fill="#f0e0a0"/><path d="M23 336 L28 337 L2 403 L0 399Z" fill="#e8d490"/>
<path d="M30 338 L37 338 L0 455 L0 432Z" fill="#4c4230"/>

<!-- dark window bottom -->
<path d="M24 384 L197 384 L178 485 L18 485Z" fill="#0c0804"/>
<g filter="url(#blr)"><path d="M38 478 Q60 464 90 470 Q130 462 175 468 L176 485 L38 485Z" fill="#4a4228" opacity="0.8"/><ellipse cx="62" cy="476" rx="12" ry="5" fill="#8a7c50" opacity="0.7"/><ellipse cx="105" cy="474" rx="14" ry="5" fill="#6a6878" opacity="0.6"/><ellipse cx="150" cy="474" rx="14" ry="5" fill="#8a7c50" opacity="0.7"/></g>
<!-- cab side panel -->
<path d="M245 276 L273 265 L396 293 L442 306 L496 405 L496 485 L178 485 Q195 380 245 276Z" fill="url(#gcab)"/>
<path d="M245 276 Q198 370 178 485" stroke="#2a1e0a" stroke-width="4" fill="none"/>
<path d="M238 290 Q200 380 186 485" stroke="#d8c070" stroke-width="1.5" fill="none"/>
<!-- body side: door etc -->
<path d="M352 365 L489 404 L496 405 L496 485 L315 485 Z" fill="#ddd2a8"/>
<path d="M315 485 L352 365 L496 406" stroke="#b0a888" stroke-width="2.5" fill="none"/>
<path d="M354 388 Q358 379 368 380 L385 382 Q395 384 395 396 L395 485 L340 485Z" fill="#221c10"/>
<path d="M417 398 L468 409 Q476 411 476 421 L476 485 L417 485Z" fill="#cfc49a"/>
<rect x="404" y="392" width="5" height="93" fill="#b8b8a8"/><rect x="482" y="410" width="5" height="75" fill="#b8b8a8"/>
<!-- brown roof equipment -->
<path d="M464 341 L560 377 L655 380 L655 448 L496 405Z" fill="#4a3a22"/>
<path d="M464 341 L560 377 L655 380" stroke="#c09838" stroke-width="2" fill="none"/>
<path d="M560 377 L594 444" stroke="#6a5838" stroke-width="1" fill="none"/>
<path d="M496 405 L655 448" stroke="#e8c050" stroke-width="3" fill="none"/>
<!-- lower side glare -->
<path d="M496 405 L655 448 L655 485 L496 485Z" fill="url(#gside)"/>
<g filter="url(#blr)"><path d="M512 418 L560 428 L640 456" stroke="#fffadc" stroke-width="7" fill="none" opacity="0.9"/>
<path d="M505 446 L560 452 L625 476" stroke="#fff6c0" stroke-width="8" fill="none" opacity="0.85"/></g><path d="M514 419 L560 428 L636 455" stroke="#fffce8" stroke-width="3" fill="none"/><path d="M508 447 L560 453 L620 475" stroke="#fff8d0" stroke-width="3.5" fill="none"/>
</svg></div>
  <!-- v scrollbar -->
  <div class="a chk" style="left:655px;top:22px;width:16px;height:431px"></div>
  <div class="a btn" style="left:655px;top:22px;width:16px;height:16px"><div class="a" style="left:4px;top:5px;width:0;height:0;border-left:4px solid transparent;border-right:4px solid transparent;border-bottom:4px solid #000"></div></div>
  <div class="a btn" style="left:655px;top:57px;width:16px;height:128px"></div>
  <div class="a btn" style="left:655px;top:437px;width:16px;height:16px"><div class="a" style="left:4px;top:6px;width:0;height:0;border-left:4px solid transparent;border-right:4px solid transparent;border-top:4px solid #000"></div></div>
  <!-- h scrollbar -->
  <div class="a chk" style="left:0;top:453px;width:655px;height:16px"></div>
  <div class="a btn" style="left:-8px;top:453px;width:16px;height:16px"><div class="a" style="left:5px;top:4px;width:0;height:0;border-top:4px solid transparent;border-bottom:4px solid transparent;border-right:4px solid #000"></div></div>
  <div class="a btn" style="left:163px;top:453px;width:234px;height:16px"></div>
  <div class="a btn" style="left:639px;top:453px;width:16px;height:16px"><div class="a" style="left:6px;top:4px;width:0;height:0;border-top:4px solid transparent;border-bottom:4px solid transparent;border-left:4px solid #000"></div></div>
  <div class="a" style="left:655px;top:453px;width:16px;height:16px;background:#d4d0c8"></div>
  <!-- bottom toolbar -->
  <div class="a" style="left:0;top:469px;width:671px;height:38px;background:#fff" id="vtb">
    <svg class="a" style="left:0;top:0" width="671" height="38" viewBox="0 501 671 38">
      <defs><radialGradient id="bl" cx="0.4" cy="0.35" r="0.7"><stop offset="0" stop-color="#60b0ff"/><stop offset="1" stop-color="#1050b0"/></radialGradient></defs>
      <circle cx="155.5" cy="521" r="7.5" fill="url(#bl)"/><path d="M152 517 V525 M159 517 L154 521 L159 525Z" stroke="#fff" stroke-width="1.5" fill="#fff"/>
      <circle cx="179.5" cy="521" r="7.5" fill="url(#bl)"/><path d="M183 517 V525 M176 517 L181 521 L176 525Z" stroke="#fff" stroke-width="1.5" fill="#fff"/>
      <line x1="195.5" y1="513" x2="195.5" y2="530" stroke="#a0a0a0"/>
      <rect x="206" y="516" width="12" height="10" fill="#fff" stroke="#4a7aa0"/><path d="M207 525 L211 520 L214 523 L217 521 V525Z" fill="#40a040"/><path d="M204 514 H207 M204 514 V517 M220 514 H217 M220 514 V517 M204 528 H207 M204 528 V525 M220 528 H217 M220 528 V525" stroke="#102040" stroke-width="1.3"/>
      <rect x="230" y="517" width="12" height="9" fill="#a0c8a0" stroke="#4a7aa0"/><path d="M236 512 V531 M227 521.5 H245" stroke="#2a5a90" stroke-width="1.2"/>
      <rect x="253" y="514" width="13" height="9" fill="#f0f0f8" stroke="#9090a0"/><path d="M259.5 523 V528 M256 530 L259.5 527 L263 530" stroke="#8080a0" fill="none"/>
      <line x1="275.5" y1="513" x2="275.5" y2="530" stroke="#a0a0a0"/>
      <rect x="281.5" y="509.5" width="22" height="22" fill="#e8e8e8" stroke="#a0a0a0"/><path d="M281.5 531 V509.5 H303" stroke="#707070" fill="none"/>
      <circle cx="295" cy="517.5" r="5.5" fill="#d8ecfc" stroke="#3060a0" stroke-width="1.3"/><path d="M292 517.5 H298 M295 514.5 V520.5" stroke="#1040a0" stroke-width="1.5"/><path d="M291 522 L286 528" stroke="#c07030" stroke-width="2.5"/>
      <circle cx="319" cy="517.5" r="5.5" fill="#d8ecfc" stroke="#3060a0" stroke-width="1.3"/><path d="M316 517.5 H322" stroke="#1040a0" stroke-width="1.5"/><path d="M315 522 L310 528" stroke="#c07030" stroke-width="2.5"/>
      <line x1="331.5" y1="513" x2="331.5" y2="530" stroke="#a0a0a0"/>
      <path d="M341 526 L348 517 L355 526Z" fill="#40a040"/><path d="M344 525 L348 517 L350 525Z" fill="#0a4060"/><path d="M345 517 L349 514 L352 517" stroke="#0a4060" stroke-width="1.3" fill="none"/>
      <path d="M364 526 L371 517 L378 526Z" fill="#40a040"/><path d="M366 525 L371 517 L373 525Z" fill="#0a4060"/><path d="M368 517 L371 514 L375 517" stroke="#0a4060" stroke-width="1.3" fill="none"/>
      <line x1="387.5" y1="513" x2="387.5" y2="530" stroke="#a0a0a0"/>
      <path d="M399 515 L410 527 M410 515 L399 527" stroke="#e02020" stroke-width="2"/>
      <rect x="421" y="519" width="14" height="7" fill="#c8c8c8" stroke="#808080"/><rect x="424" y="513" width="8" height="6" fill="#f0f0f0" stroke="#a0a0a0"/>
      <rect x="445" y="514" width="13" height="13" fill="#5050a8"/><rect x="448" y="515" width="7" height="5" fill="#e0e0f0"/><rect x="448" y="522" width="7" height="5" fill="#d0d0d8"/>
      <rect x="468" y="515" width="14" height="12" fill="#3080c0"/><path d="M469 526 L474 519 L478 523 L481 521 V526Z" fill="#40a040"/><circle cx="480" cy="515" r="2.5" fill="#e0e060"/>
      <line x1="491.5" y1="513" x2="491.5" y2="530" stroke="#a0a0a0"/>
      <circle cx="508" cy="521" r="7.5" fill="url(#bl)" stroke="#a0c0e0"/><text x="504.5" y="525.5" font-size="11" font-weight="bold" fill="#fff" font-family="Liberation Sans">?</text>
    </svg>
  </div>
</div>
</body></html>
